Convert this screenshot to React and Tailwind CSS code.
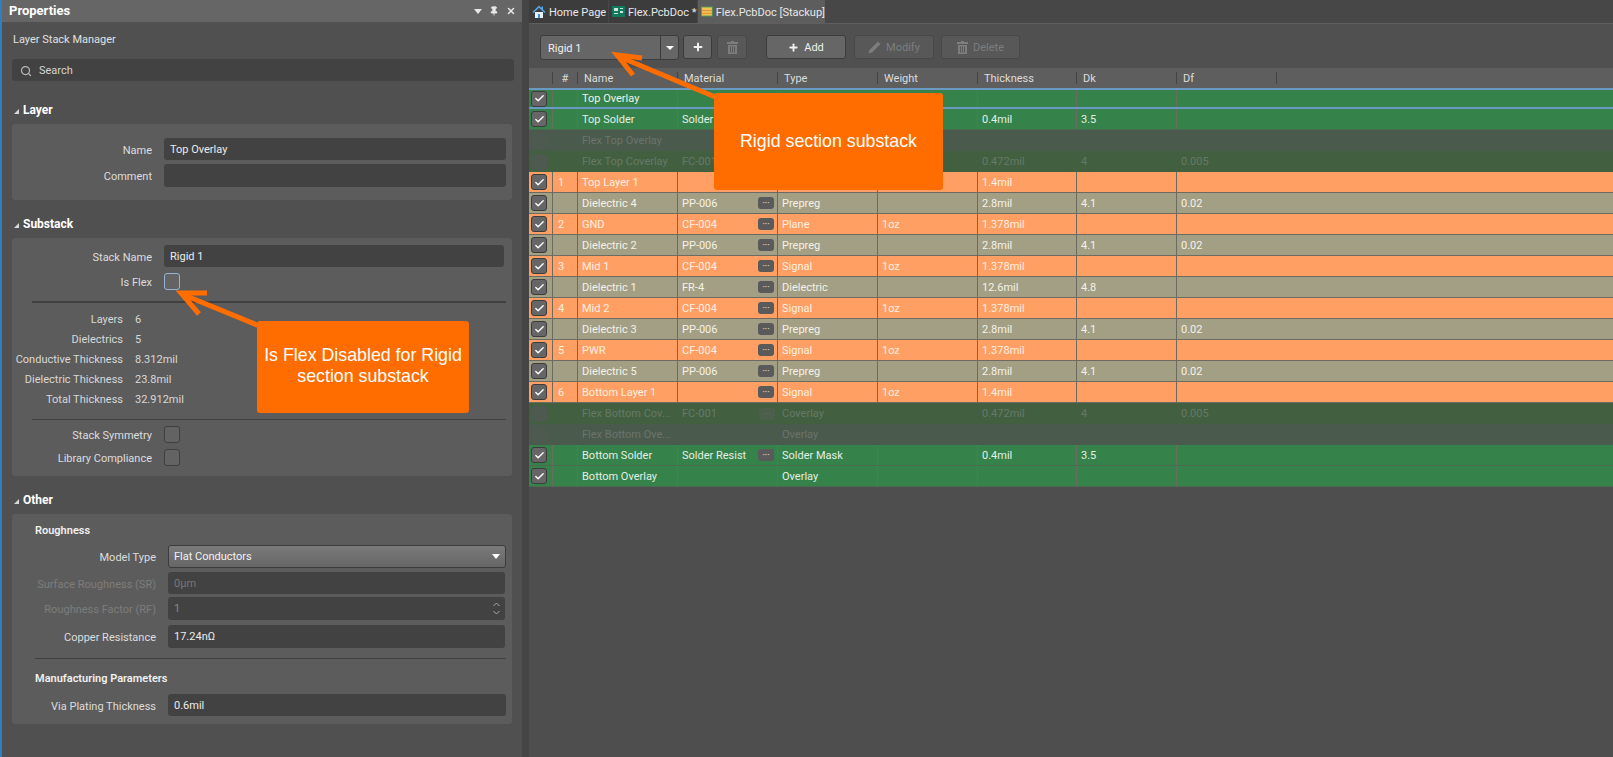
import { Check, Plus, Search, Pin, X } from 'lucide-react'

const LAYER_ROWS = [
  { kind: 'sel', name: 'Top Overlay', type: 'Overlay' },
  { kind: 'green', name: 'Top Solder', material: 'Solder Resist', more: true, type: 'Solder Mask', thickness: '0.4mil', dk: '3.5' },
  { kind: 'flexTop', name: 'Flex Top Overlay', type: 'Overlay' },
  { kind: 'flexCover', name: 'Flex Top Coverlay', material: 'FC-001', more: true, type: 'Coverlay', thickness: '0.472mil', dk: '4', df: '0.005' },
  { kind: 'copper', num: '1', name: 'Top Layer 1', more: true, type: 'Signal', weight: '1oz', thickness: '1.4mil' },
  { kind: 'diel', name: 'Dielectric 4', material: 'PP-006', more: true, type: 'Prepreg', thickness: '2.8mil', dk: '4.1', df: '0.02' },
  { kind: 'copper', num: '2', name: 'GND', material: 'CF-004', more: true, type: 'Plane', weight: '1oz', thickness: '1.378mil' },
  { kind: 'diel', name: 'Dielectric 2', material: 'PP-006', more: true, type: 'Prepreg', thickness: '2.8mil', dk: '4.1', df: '0.02' },
  { kind: 'copper', num: '3', name: 'Mid 1', material: 'CF-004', more: true, type: 'Signal', weight: '1oz', thickness: '1.378mil' },
  { kind: 'diel', name: 'Dielectric 1', material: 'FR-4', more: true, type: 'Dielectric', thickness: '12.6mil', dk: '4.8' },
  { kind: 'copper', num: '4', name: 'Mid 2', material: 'CF-004', more: true, type: 'Signal', weight: '1oz', thickness: '1.378mil' },
  { kind: 'diel', name: 'Dielectric 3', material: 'PP-006', more: true, type: 'Prepreg', thickness: '2.8mil', dk: '4.1', df: '0.02' },
  { kind: 'copper', num: '5', name: 'PWR', material: 'CF-004', more: true, type: 'Signal', weight: '1oz', thickness: '1.378mil' },
  { kind: 'diel', name: 'Dielectric 5', material: 'PP-006', more: true, type: 'Prepreg', thickness: '2.8mil', dk: '4.1', df: '0.02' },
  { kind: 'copper', num: '6', name: 'Bottom Layer 1', more: true, type: 'Signal', weight: '1oz', thickness: '1.4mil' },
  { kind: 'flexCover', name: 'Flex Bottom Cov...', material: 'FC-001', more: true, type: 'Coverlay', thickness: '0.472mil', dk: '4', df: '0.005' },
  { kind: 'flexTop', name: 'Flex Bottom Ove...', type: 'Overlay' },
  { kind: 'green', name: 'Bottom Solder', material: 'Solder Resist', more: true, type: 'Solder Mask', thickness: '0.4mil', dk: '3.5' },
  { kind: 'green', name: 'Bottom Overlay', type: 'Overlay' },
]

const ROW_STYLES = {
  sel: 'bg-[#35824a] text-[#eef3ee] border-y-2 border-[#6a9ac4]',
  green: 'bg-[#35824a] text-[#e4efe6] border-b border-[#4b6a52]',
  flexTop: 'bg-[#4a5a4c] text-[#6c746c]',
  flexCover: 'bg-[#42603f] text-[#67786a]',
  copper: 'bg-[#ff9f63] text-[#fff0e2] border-b border-[#6e6a62]',
  diel: 'bg-[#a39f84] text-[#f4f2e8] border-b border-[#6e6c60]',
}

const COLUMNS = [
  { label: 'Name', w: 'w-[100px]' },
  { label: 'Material', w: 'w-[100px]' },
  { label: 'Type', w: 'w-[100px]' },
  { label: 'Weight', w: 'w-[100px]' },
  { label: 'Thickness', w: 'w-[99px]' },
  { label: 'Dk', w: 'w-[100px]' },
  { label: 'Df', w: 'w-[100px]' },
]

function SectionTitle({ children, className }) {
  return (
    <div className={`flex items-center h-[18px] pl-[12px] gap-[4px] text-[12px] font-bold text-white ${className}`}>
      <span className="w-0 h-0 border-l-[5px] border-l-transparent border-b-[5px] border-b-[#d8d8d8] mt-[2px]" />
      {children}
    </div>
  )
}

function Input({ value, className, muted }) {
  return (
    <div className={`flex items-center h-[22px] pl-[6px] pt-[2px] rounded-[3px] bg-[#424242] text-[11px] ${muted ? 'text-[#777777]' : 'text-[#ececec]'} ${className}`}>
      {value}
    </div>
  )
}

function Field({ label, children, muted, labelW = 'w-[152px]', className = '' }) {
  return (
    <div className={`flex items-center ${className}`}>
      <div className={`${labelW} h-[16px] shrink-0 flex items-center justify-end text-[11px] pr-[12px] pt-[4px] ${muted ? 'text-[#7d7d7d]' : 'text-[#dddddd]'}`}>{label}</div>
      {children}
    </div>
  )
}

function Stat({ label, value }) {
  return (
    <div className="flex items-center h-[20px] pt-[4px] text-[11px] text-[#d8d8d8]">
      <div className="w-[111px] shrink-0 text-right whitespace-nowrap">{label}</div>
      <div className="pl-[12px]">{value}</div>
    </div>
  )
}

function CheckBox({ focus }) {
  return <div className={`w-[16px] h-[17px] rounded-[3px] border-[1.5px] bg-[#636363] ${focus ? 'border-[#93b4d4]' : 'border-[#3f3f3f]'}`} />
}

function PropertiesPanel() {
  return (
    <aside className="w-[522px] shrink-0 h-full bg-[#505050] border-l-2 border-l-[#2f7fc1] flex flex-col">
      <div className="flex items-center justify-between h-[22px] pl-[7px] pr-[6px] bg-[#666666]">
        <span className="text-[13px] font-bold text-white">Properties</span>
        <div className="flex items-center gap-[7px] text-[#e8e8e8]">
          <span className="w-0 h-0 border-l-[4px] border-r-[4px] border-t-[5px] border-l-transparent border-r-transparent border-t-[#e8e8e8]" />
          <Pin size={10} fill="currentColor" strokeWidth={2} />
          <X size={10} strokeWidth={3.5} />
        </div>
      </div>
      <div className="pl-[10px] pr-[8px] pt-[9px] flex flex-col">
        <div className="h-[18px] flex items-center text-[11px] text-[#e0e0e0] pl-[1px]">Layer Stack Manager</div>
        <div className="mt-[10px] flex items-center h-[22px] rounded-[3px] bg-[#424242] pl-[8px] pt-[2px] gap-[7px] text-[11px] text-[#d4d4d4]">
          <Search size={12} strokeWidth={2.5} className="text-[#b8b8b8]" />
          Search
        </div>
      </div>
      <SectionTitle className="mt-[20px]">Layer</SectionTitle>
      <div className="ml-[10px] mr-[10px] mt-[5px] h-[76px] rounded-[3px] bg-[#5c5c5c] pt-[14px] pr-[6px] flex flex-col gap-[4px]">
        <Field label="Name"><Input value="Top Overlay" className="flex-1" /></Field>
        <Field label="Comment"><Input className="flex-1 h-[23px]" /></Field>
      </div>
      <SectionTitle className="mt-[15px]">Substack</SectionTitle>
      <div className="ml-[10px] mr-[10px] mt-[5px] h-[238px] rounded-[3px] bg-[#5c5c5c] pt-[7px] pr-[6px]">
        <Field label="Stack Name"><Input value="Rigid 1" className="flex-1 mr-[2px]" /></Field>
        <Field label="Is Flex" className="mt-[6px]"><CheckBox focus /></Field>
        <div className="ml-[20px] mt-[11px] h-[2px] bg-[#404040]" />
        <div className="mt-[5px]">
          <Stat label="Layers" value="6" />
          <Stat label="Dielectrics" value="5" />
          <Stat label="Conductive Thickness" value="8.312mil" />
          <Stat label="Dielectric Thickness" value="23.8mil" />
          <Stat label="Total Thickness" value="32.912mil" />
        </div>
        <div className="ml-[20px] mt-[11px] h-[1px] bg-[#404040]" />
        <Field label="Stack Symmetry" className="mt-[6px]"><CheckBox /></Field>
        <Field label="Library Compliance" className="mt-[6px]"><CheckBox /></Field>
      </div>
      <SectionTitle className="mt-[15px]">Other</SectionTitle>
      <div className="ml-[10px] mr-[10px] mt-[5px] h-[210px] rounded-[3px] bg-[#5c5c5c] pt-[7px] pr-[6px]">
        <div className="pl-[23px] h-[18px] pt-[2px] flex items-center text-[11px] font-semibold text-[#f0f0f0]">Roughness</div>
        <Field label="Model Type" labelW="w-[156px]" className="mt-[6px]">
          <div className="flex-1 flex items-center justify-between h-[23px] pl-[5px] pr-[5px] rounded-[3px] border border-[#3c3c3c] bg-gradient-to-b from-[#7a7a7a] to-[#666666] text-[11px] text-[#f2f2f2]">
            <span className="pt-[2px]">Flat Conductors</span>
            <span className="w-0 h-0 border-l-[4px] border-r-[4px] border-t-[5px] border-l-transparent border-r-transparent border-t-white" />
          </div>
        </Field>
        <Field label="Surface Roughness (SR)" muted labelW="w-[156px]" className="mt-[4px]"><Input value="0µm" muted className="flex-1 mr-[1px]" /></Field>
        <Field label="Roughness Factor (RF)" muted labelW="w-[156px]" className="mt-[3px]">
          <div className="flex-1 mr-[1px] flex items-center justify-between h-[23px] pl-[6px] pr-[5px] rounded-[3px] bg-[#424242] text-[11px] text-[#8a8a8a]">
            <span className="pt-[2px]">1</span>
            <div className="flex flex-col gap-[3px] text-[#a8a8a8]">
              <svg width="7" height="5" viewBox="0 0 7 5" fill="none" stroke="currentColor"><path d="M0.5 4 3.5 1 6.5 4" /></svg>
              <svg width="7" height="5" viewBox="0 0 7 5" fill="none" stroke="currentColor"><path d="M0.5 1 3.5 4 6.5 1" /></svg>
            </div>
          </div>
        </Field>
        <Field label="Copper Resistance" labelW="w-[156px]" className="mt-[5px]"><Input value="17.24nΩ" className="flex-1 mr-[1px] h-[23px]" /></Field>
        <div className="ml-[23px] mt-[10px] h-[1px] bg-[#404040]" />
        <div className="pl-[23px] mt-[10px] h-[18px] pt-[2px] flex items-center text-[11px] font-semibold text-[#f0f0f0]">Manufacturing Parameters</div>
        <Field label="Via Plating Thickness" labelW="w-[156px]" className="mt-[7px]"><Input value="0.6mil" className="flex-1" /></Field>
      </div>
    </aside>
  )
}

function Tab({ icon, label, active, className }) {
  return (
    <div className={`flex items-center h-[23px] pl-[3px] gap-[3px] text-[11px] text-[#e8e8e8] mr-[1px] ${active ? 'bg-[#5d5d5d]' : 'bg-[#3c3c3c]'} ${className}`}>
      {icon}
      <span className="whitespace-nowrap pt-[3px]">{label}</span>
    </div>
  )
}

function HomeIcon() {
  return (
    <svg width="14" height="13" viewBox="0 0 14 13">
      <path d="M3 7h8v6H3z" fill="#e6f1fa" />
      <path d="M6 9h2v4H6z" fill="#3f8fd6" />
      <path d="M7 0.5 0.5 7l1 1L7 2.8 12.5 8l1-1L11 4.5V1.5H9.5v1.6z" fill="#58a6e8" />
    </svg>
  )
}

function PcbIcon() {
  return (
    <svg width="13" height="11" viewBox="0 0 13 11">
      <rect width="13" height="11" fill="#11795c" />
      <rect x="2" y="2" width="4" height="3" fill="#cfe8dc" />
      <rect x="8" y="2" width="3" height="1" fill="#cfe8dc" />
      <rect x="8" y="5" width="3" height="2" fill="#cfe8dc" />
      <rect x="2" y="7" width="4" height="1" fill="#cfe8dc" />
    </svg>
  )
}

function StackIcon() {
  return (
    <svg width="13" height="11" viewBox="0 0 13 11">
      <rect width="13" height="11" fill="#4f9c55" />
      <rect x="1" y="1" width="11" height="9" fill="#f2c24e" />
      <rect x="1" y="4" width="11" height="1" fill="#e08a3c" />
      <rect x="1" y="7" width="11" height="1" fill="#e08a3c" />
    </svg>
  )
}

function TrashIcon() {
  return (
    <svg width="11" height="13" viewBox="0 0 11 13" fill="currentColor">
      <path d="M4 0h3v1h4v2H0V1h4z" />
      <path d="M1 4h9v9H1zM3 5.5v6h1v-6zM5 5.5v6h1v-6zM7 5.5v6h1v-6z" fillRule="evenodd" />
    </svg>
  )
}

function PencilIcon() {
  return (
    <svg width="13" height="13" viewBox="0 0 13 13" fill="currentColor">
      <path d="M10 0.5 12.5 3 4 11.5 0.5 12.5 1.5 9z" />
    </svg>
  )
}

function ToolButton({ children, label, className = '', disabled }) {
  return (
    <div className={`flex items-center justify-center gap-[5px] h-[24px] rounded-[3px] border text-[11px] ${disabled ? 'border-[#484848] bg-[#585858] text-[#7d7d7d]' : 'border-[#3c3c3c] bg-[#666666] text-[#f0f0f0]'} ${className}`}>
      {children}
      {label && <span className="pt-[3px]">{label}</span>}
    </div>
  )
}

function Toolbar() {
  return (
    <div className="flex items-start h-[44px] pt-[11px] pl-[11px] bg-[#505050]">
      <div className="flex w-[139px] h-[25px] rounded-[3px] border border-[#3c3c3c] bg-[#666666] text-[11px] text-[#f0f0f0]">
        <div className="flex-1 flex items-center pl-[7px] pt-[3px]">Rigid 1</div>
        <div className="w-[18px] flex items-center justify-center border-l border-l-[#3c3c3c]">
          <span className="w-0 h-0 border-l-[4px] border-r-[4px] border-t-[4px] border-l-transparent border-r-transparent border-t-white" />
        </div>
      </div>
      <ToolButton className="w-[29px] ml-[4px]"><Plus size={12} strokeWidth={4} /></ToolButton>
      <ToolButton className="w-[30px] ml-[5px]" disabled><TrashIcon /></ToolButton>
      <ToolButton className="w-[80px] ml-[19px]" label="Add"><Plus size={11} strokeWidth={4} /></ToolButton>
      <ToolButton className="w-[80px] ml-[8px]" disabled label="Modify"><PencilIcon /></ToolButton>
      <ToolButton className="w-[79px] ml-[7px]" disabled label="Delete"><TrashIcon /></ToolButton>
    </div>
  )
}

function TableHeader() {
  return (
    <div className="flex items-center h-[20px] bg-[#5e5e5e] text-[11px] text-[#dcdcdc]">
      <div className="w-[24px] h-[12px] border-r border-r-[#444444]" />
      <div className="w-[25px] h-[12px] pt-[2px] flex items-center justify-center border-r border-r-[#444444]">#</div>
      {COLUMNS.map((col) => (
        <div key={col.label} className={`${col.w} h-[12px] pt-[2px] flex items-center pl-[6px] border-r border-r-[#444444]`}>{col.label}</div>
      ))}
    </div>
  )
}

function Row({ row }) {
  const disabled = row.kind === 'flexTop' || row.kind === 'flexCover'
  const divider = disabled ? '' : 'border-r border-r-[#6b6b60]'
  const cell = `h-full flex items-center pl-[4px] pt-[2px] ${divider}`
  return (
    <div className={`flex items-center h-[21px] ${ROW_STYLES[row.kind]} text-[11px]`}>
      <div className={`w-[24px] h-full flex items-center pl-[2px] shrink-0 ${divider}`}>
        <div className={`w-[16px] h-[16px] rounded-[3px] border flex items-center justify-center ${disabled ? 'bg-[#4e5a4f] border-[#4e5a4f]' : 'bg-[#666666] border-[#3c3c3c]'}`}>
          {!disabled && <Check size={11} strokeWidth={3} className="text-white" />}
        </div>
      </div>
      <div className={`w-[25px] pl-[5px] ${cell}`}>{row.num}</div>
      <div className={`w-[100px] ${cell} whitespace-nowrap`}>{row.name}</div>
      <div className={`w-[100px] h-full flex items-center pl-[4px] ${divider} justify-between pr-[3px] whitespace-nowrap`}>
        <span className="pt-[2px]">{row.material}</span>
        {row.more && (
          <span className={`w-[16px] h-[12px] rounded-[3px] flex items-center justify-center text-[8px] leading-none font-bold ${disabled ? 'bg-[#4c5f4b] text-[#5c6b5c]' : 'bg-[#5a5a5a] text-[#d8d8d8]'}`}>···</span>
        )}
      </div>
      <div className={`w-[100px] ${cell}`}>{row.type}</div>
      <div className={`w-[100px] ${cell}`}>{row.weight}</div>
      <div className={`w-[99px] ${cell}`}>{row.thickness}</div>
      <div className={`w-[100px] ${cell}`}>{row.dk}</div>
      <div className="w-[100px] h-full flex items-center pl-[4px] pt-[2px]">{row.df}</div>
    </div>
  )
}

function Callout({ className, children }) {
  return (
    <div className={`absolute flex items-center justify-center text-center rounded-[3px] bg-[#ff6d00] text-white text-[17.8px] leading-[21px] ${className}`} style={{ fontFamily: '"Liberation Sans", sans-serif' }}>
      {children}
    </div>
  )
}

function Arrow({ className, width, height, line, head }) {
  return (
    <svg className={`absolute pointer-events-none ${className}`} width={width} height={height} viewBox={`0 0 ${width} ${height}`} fill="none" stroke="#ff6d00" strokeWidth="5" strokeLinejoin="miter">
      <path d={line} />
      <path d={head} />
    </svg>
  )
}

export default function App() {
  return (
    <div className="relative flex w-[1613px] h-[757px] overflow-hidden bg-[#4e4e4e]" style={{ fontFamily: 'Roboto, "Noto Sans", sans-serif' }}>
      <PropertiesPanel />
      <div className="w-[7px] shrink-0 bg-[#454545]" />
      <main className="flex-1 flex flex-col min-w-0">
        <div className="flex h-[24px] bg-[#474747] border-b border-b-[#5f5f5f]">
          <Tab icon={<HomeIcon />} label="Home Page" className="w-[79px]" />
          <Tab icon={<PcbIcon />} label="Flex.PcbDoc *" className="w-[88px]" />
          <Tab icon={<StackIcon />} label="Flex.PcbDoc [Stackup]" active className="w-[127px]" />
        </div>
        <Toolbar />
        <TableHeader />
        <div className="flex flex-col">
          {LAYER_ROWS.map((row) => (
            <Row key={row.name} row={row} />
          ))}
        </div>
      </main>

      <Callout className="left-[257px] top-[321px] w-[212px] h-[92px] pb-[2px]">Is Flex Disabled for Rigid<br />section substack</Callout>
      <Callout className="left-[714px] top-[93px] w-[229px] h-[97px]">Rigid section substack</Callout>
      <Arrow className="left-[170px] top-[285px]" width={100} height={50} line="M92 42 14 10" head="M37 8 11 8 29 29" />
      <Arrow className="left-[607px] top-[45px]" width={120} height={60} line="M113 54 13 12" head="M35 13 10 10 26 30" />
    </div>
  )
}
